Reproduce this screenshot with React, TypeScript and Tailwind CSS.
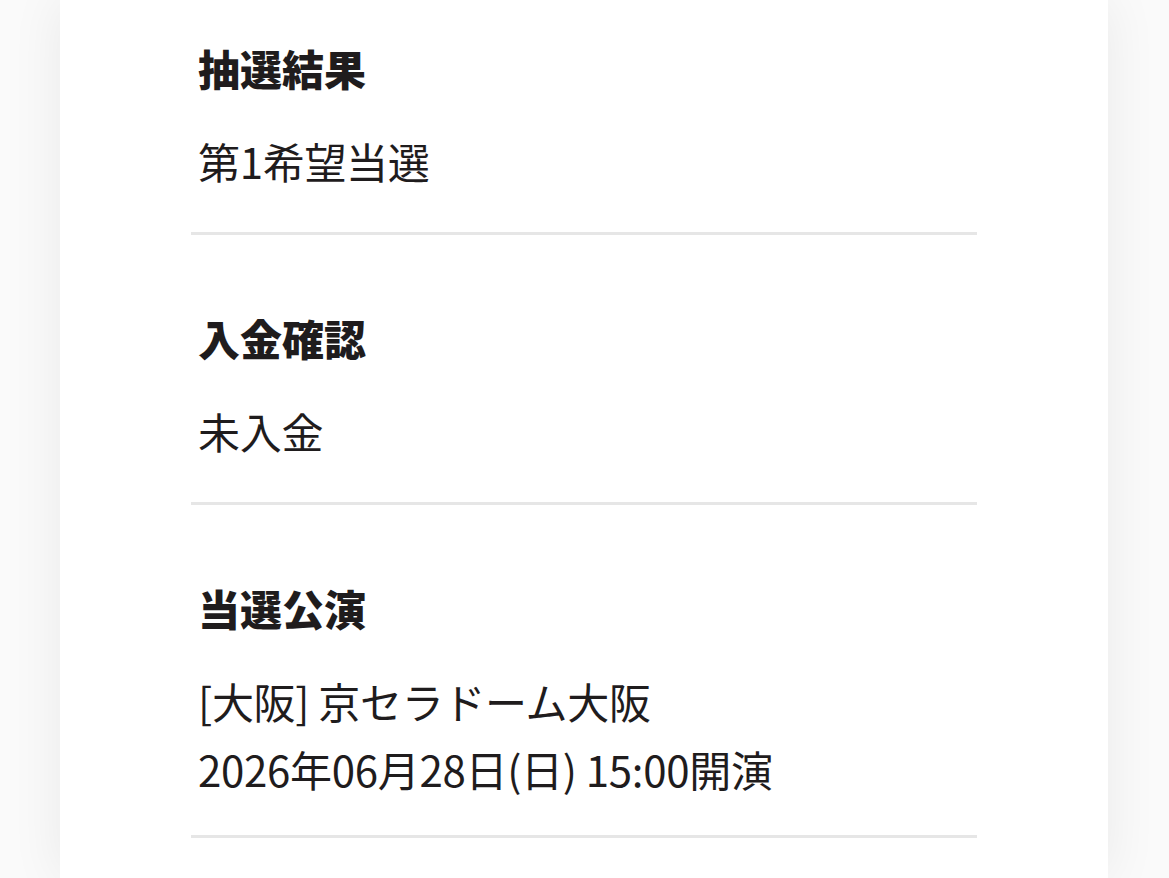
const rows = [
  { title: "抽選結果", lines: ["第1希望当選"], pad: "pt-[38px] pb-[37px]" },
  { title: "入金確認", lines: ["未入金"], pad: "pt-[73px] pb-[37px]" },
  {
    title: "当選公演",
    lines: ["[大阪] 京セラドーム大阪", "2026年06月28日(日) 15:00開演"],
    pad: "pt-[73px] pb-[32px]",
  },
];

export default function App() {
  return (
    <div
      className="min-h-screen bg-[#fafafa] text-[#1f1c1d]"
      style={{ fontFamily: '"Noto Sans CJK JP", "Noto Sans", sans-serif' }}
    >
      <div className="ml-[60px] mr-[61px] min-h-screen bg-white px-[131px] shadow-[0_0_50px_rgba(0,0,0,0.07)]">
        {rows.map((row) => (
          <section key={row.title} className={`border-b-[3px] border-[#e6e6e6] ${row.pad}`}>
            <h2 className="pl-[7px] text-[42px] font-black leading-[60px]">{row.title}</h2>
            <div className="mt-[29px] pl-[7px] text-[42px] leading-[68px] tracking-[-0.3px]">
              {row.lines.map((line) => (
                <p key={line}>{line}</p>
              ))}
            </div>
          </section>
        ))}
      </div>
    </div>
  );
}
